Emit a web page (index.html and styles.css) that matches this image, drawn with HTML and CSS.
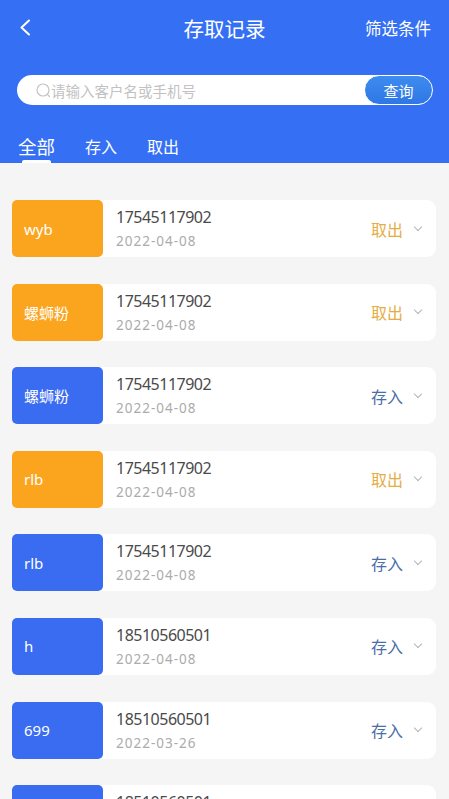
FILE: index.html
```html
<!DOCTYPE html>
<html lang="zh">
<head>
<meta charset="utf-8">
<link rel="stylesheet" href="styles.css">
</head>
<body>
<div class="page">
  <header class="header">
    <div class="topbar">
      <span class="back"><svg width="12" height="17" viewBox="0 0 12 17"><path d="M10 1.5 L2.5 8.5 L10 15.5" fill="none" stroke="#fff" stroke-width="2" stroke-linecap="round" stroke-linejoin="round"/></svg></span>
      <h1 class="title">存取记录</h1>
      <span class="filter">筛选条件</span>
    </div>
    <div class="search">
      <svg class="search-icon" width="15" height="15" viewBox="0 0 15 15"><circle cx="7" cy="7" r="6" fill="none" stroke="#c4c4c4" stroke-width="1.2"/><path d="M11.3 11.3 L13.5 13.5" stroke="#c4c4c4" stroke-width="1.2" stroke-linecap="round"/></svg>
      <span class="placeholder">请输入客户名或手机号</span>
      <span class="query">查询</span>
    </div>
    <nav class="tabs">
      <span class="tab active">全部</span>
      <span class="tab">存入</span>
      <span class="tab">取出</span>
    </nav>
  </header>
  <main class="list">
    <div class="card"><div class="tag out">wyb</div><div class="info"><div class="phone">17545117902</div><div class="date">2022-04-08</div></div><div class="status out-text">取出</div><span class="chev"></span></div>
    <div class="card"><div class="tag out">螺蛳粉</div><div class="info"><div class="phone">17545117902</div><div class="date">2022-04-08</div></div><div class="status out-text">取出</div><span class="chev"></span></div>
    <div class="card"><div class="tag in">螺蛳粉</div><div class="info"><div class="phone">17545117902</div><div class="date">2022-04-08</div></div><div class="status in-text">存入</div><span class="chev"></span></div>
    <div class="card"><div class="tag out">rlb</div><div class="info"><div class="phone">17545117902</div><div class="date">2022-04-08</div></div><div class="status out-text">取出</div><span class="chev"></span></div>
    <div class="card"><div class="tag in">rlb</div><div class="info"><div class="phone">17545117902</div><div class="date">2022-04-08</div></div><div class="status in-text">存入</div><span class="chev"></span></div>
    <div class="card"><div class="tag in">h</div><div class="info"><div class="phone">18510560501</div><div class="date">2022-04-08</div></div><div class="status in-text">存入</div><span class="chev"></span></div>
    <div class="card"><div class="tag in">699</div><div class="info"><div class="phone">18510560501</div><div class="date">2022-03-26</div></div><div class="status in-text">存入</div><span class="chev"></span></div>
    <div class="card"><div class="tag in">h</div><div class="info"><div class="phone">18510560501</div><div class="date">2022-03-26</div></div><div class="status in-text">存入</div><span class="chev"></span></div>
  </main>
</div>
</body>
</html>
```

FILE: styles.css
```css
* { box-sizing: border-box; margin: 0; padding: 0; }
html, body { width: 449px; height: 799px; overflow: hidden; }
body {
  background: #f5f5f5;
  font-family: "Noto Sans", "Noto Sans CJK SC", sans-serif;
}
.page { width: 449px; height: 799px; overflow: hidden; }
.header {
  background: #3570f4;
  height: 163px;
  display: flex;
  flex-direction: column;
  position: relative;
}
.topbar {
  height: 55px;
  display: flex;
  align-items: center;
  justify-content: space-between;
  padding: 0 18px 0 19px;
  color: #fff;
  position: relative;
}
.back { display: flex; width: 12px; height: 17px; }
.title {
  position: absolute;
  left: 0; right: 0;
  text-align: center;
  font-family: "Noto Sans CJK SC", sans-serif;
  font-size: 20.5px;
  font-weight: 400;
  pointer-events: none;
}
.filter {
  font-family: "Noto Sans CJK SC", sans-serif;
  font-size: 16.5px;
}
.search {
  margin: 20px 17px 0 17px;
  height: 30px;
  background: #fff;
  border-radius: 15px;
  display: flex;
  align-items: center;
  padding-left: 19px;
}
.search-icon { flex: none; }
.placeholder {
  font-family: "Noto Sans CJK SC", sans-serif;
  font-size: 14.5px;
  color: #c2c2c2;
  flex: 1;
}
.query {
  width: 69px;
  height: 30px;
  border-radius: 15px;
  border: 1.5px solid #fff;
  background: linear-gradient(180deg, #3d8cf0, #2f77e6);
  color: #fff;
  font-family: "Noto Sans CJK SC", sans-serif;
  font-size: 15px;
  display: flex;
  align-items: center;
  justify-content: center;
  margin-right: -1px;
}
.tabs {
  display: flex;
  align-items: center;
  margin-top: auto;
  height: 34px;
  padding-left: 18px;
  gap: 30px;
}
.tab {
  color: #fff;
  font-family: "Noto Sans CJK SC", sans-serif;
  font-size: 16px;
  position: relative;
  line-height: 1;
}
.tab.active { font-size: 18.5px; }
.tab.active::after {
  content: "";
  position: absolute;
  left: 4px;
  width: 29px;
  height: 3px;
  bottom: -8px;
  background: #fff;
  border-radius: 2px 2px 0 0;
}
.list {
  padding: 37px 13px 0 12px;
  display: flex;
  flex-direction: column;
  gap: 26.6px;
}
.card {
  height: 57px;
  background: #fff;
  border-radius: 5px 9px 9px 5px;
  display: flex;
  align-items: center;
  flex: none;
}
.tag {
  width: 91px;
  height: 57px;
  border-radius: 5px;
  display: flex;
  align-items: center;
  padding-left: 12px;
  color: #fff;
  font-family: "Noto Sans", "Noto Sans CJK SC", sans-serif;
  font-size: 15px;
}
.tag.out { background: #fba51f; }
.tag.in { background: #3a6cf1; }
.info {
  flex: 1;
  padding-left: 13px;
  display: flex;
  flex-direction: column;
  gap: 4px;
  padding-top: 1px;
}
.phone { font-size: 16px; color: #4a4a4a; line-height: 20px; letter-spacing: -0.5px; }
.date { font-size: 13.5px; color: #ababab; line-height: 20px; letter-spacing: 1px; }
.status {
  font-family: "Noto Sans CJK SC", sans-serif;
  font-size: 16px;
}
.out-text { color: #e5ad45; }
.in-text { color: #4b6ea9; }
.chev {
  width: 6px; height: 6px;
  border-right: 1px solid #b5b5b5;
  border-bottom: 1px solid #b5b5b5;
  transform: rotate(45deg);
  margin: -4px 15px 0 12px;
}
```
